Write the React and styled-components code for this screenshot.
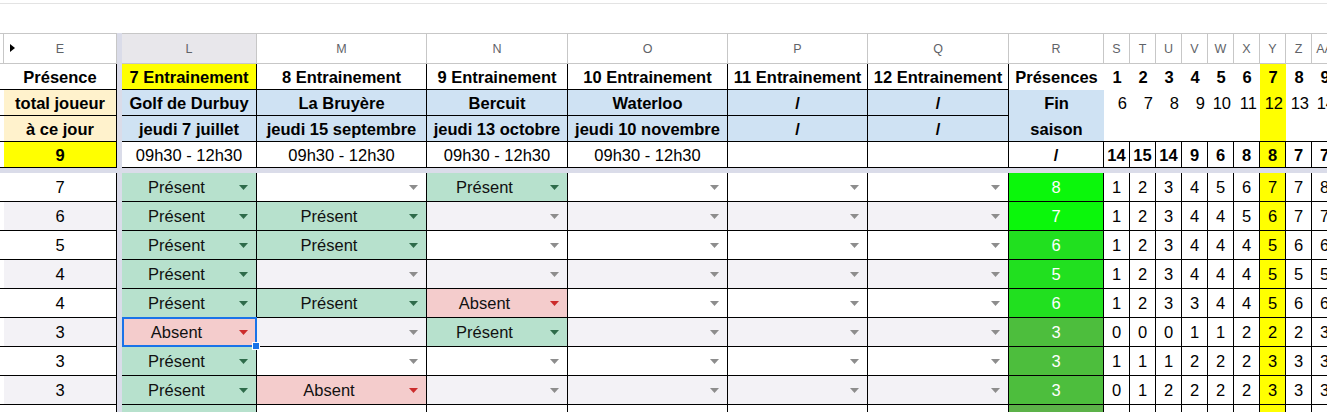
import React from 'react';
import styled, { createGlobalStyle, css } from 'styled-components';

const GlobalStyle = createGlobalStyle`
  html, body {
    margin: 0;
    padding: 0;
    background: #ffffff;
  }
  body {
    font-family: "Liberation Sans", Arial, sans-serif;
  }
`;

const YELLOW = '#ffff00';
const CREAM = '#fff2cc';
const BLUE = '#cfe2f3';
const STRIPE = '#f3f2f6';

const CHOICES = {
  P: { label: 'Présent', bg: '#b7e1cd', caret: '#2e6b4a' },
  A: { label: 'Absent', bg: '#f4cccc', caret: '#cc2b2b' },
};

const PRES_COLORS = {
  8: '#0bf70b',
  7: '#0bf70b',
  6: '#21e01f',
  5: '#21e01f',
  3: '#4dbe3d',
};

const LETTERS = ['L', 'M', 'N', 'O', 'P', 'Q', 'R', 'S', 'T', 'U', 'V', 'W', 'X', 'Y', 'Z', 'AA'];
const HIGHLIGHT = 6; // index of column Y inside the S..AA block

const SESSIONS = [
  { title: '7 Entrainement', place: 'Golf de Durbuy', date: 'jeudi 7 juillet', hours: '09h30 - 12h30', current: true },
  { title: '8 Entrainement', place: 'La Bruyère', date: 'jeudi 15 septembre', hours: '09h30 - 12h30' },
  { title: '9 Entrainement', place: 'Bercuit', date: 'jeudi 13 octobre', hours: '09h30 - 12h30' },
  { title: '10 Entrainement', place: 'Waterloo', date: 'jeudi 10 novembre', hours: '09h30 - 12h30' },
  { title: '11 Entrainement', place: '/', date: '/', hours: '' },
  { title: '12 Entrainement', place: '/', date: '/', hours: '' },
];

const ROUNDS = [1, 2, 3, 4, 5, 6, 7, 8, 9];
const ROUND_IDS = [6, 7, 8, 9, 10, 11, 12, 13, 14];
const ROUND_TOTALS = [14, 15, 14, 9, 6, 8, 8, 7, 7];

const PLAYERS = [
  { total: 7, marks: ['P', '', 'P', '', '', ''], pres: 8, counts: [1, 2, 3, 4, 5, 6, 7, 7, 8] },
  { total: 6, marks: ['P', 'P', '', '', '', ''], pres: 7, counts: [1, 2, 3, 4, 4, 5, 6, 7, 7] },
  { total: 5, marks: ['P', 'P', '', '', '', ''], pres: 6, counts: [1, 2, 3, 4, 4, 4, 5, 6, 6] },
  { total: 4, marks: ['P', '', '', '', '', ''], pres: 5, counts: [1, 2, 3, 4, 4, 4, 5, 5, 5] },
  { total: 4, marks: ['P', 'P', 'A', '', '', ''], pres: 6, counts: [1, 2, 3, 3, 4, 4, 5, 6, 6] },
  { total: 3, marks: ['A', '', 'P', '', '', ''], pres: 3, counts: [0, 0, 0, 1, 1, 2, 2, 2, 3], selected: 0 },
  { total: 3, marks: ['P', '', '', '', '', ''], pres: 3, counts: [1, 1, 1, 2, 2, 2, 3, 3, 3] },
  { total: 3, marks: ['P', 'A', '', '', '', ''], pres: 3, counts: [0, 1, 2, 2, 2, 2, 3, 3, 3] },
  { total: '', marks: ['P', '', '', '', '', ''], pres: '', presBg: '#5cb249', counts: ['', '', '', '', '', '', '', '', ''] },
];

const Page = styled.div`
  width: 1327px;
  height: 412px;
  overflow: hidden;
  padding-top: 3px;
  box-sizing: border-box;
  background: #fff;
`;

const Toolbar = styled.div`
  height: 30px;
  box-sizing: border-box;
  border-top: 1px solid #e3e3e3;
`;

const Sheet = styled.div`
  display: grid;
  grid-template-columns: 4px 113px 5px 135px 170px 141px 160px 140px 141px 95px repeat(9, 26px);
  grid-template-rows: 31px repeat(4, 26px) 5px repeat(9, 29px);
  font-size: 16.5px;
  color: #000;
`;

const FreezeCol = styled.div`
  grid-column: 3;
  grid-row: 1 / -1;
  background: #dadce9;
`;

const FreezeRow = styled.div`
  grid-column: 1 / -1;
  grid-row: 6;
  background: #dadce9;
`;

const ColHead = styled.div`
  position: relative;
  display: flex;
  align-items: center;
  justify-content: center;
  box-sizing: border-box;
  border-top: 1px solid #c7c7c7;
  border-bottom: 1px solid #c7c7c7;
  border-right: 1px solid #c7c7c7;
  background: ${(p) => (p.$active ? '#e8e7eb' : '#fff')};
  color: #5f6368;
  font-size: 12.5px;
  white-space: nowrap;
  overflow: hidden;
`;

const ExpandMark = styled.svg`
  position: absolute;
  left: 6px;
  top: 10px;
`;

const Cell = styled.div`
  position: relative;
  display: flex;
  align-items: center;
  justify-content: ${(p) => (p.$align === 'right' ? 'flex-end' : 'center')};
  padding: 0 ${(p) => (p.$align === 'right' ? '3px' : '2px')};
  box-sizing: border-box;
  min-width: 0;
  border-right: ${(p) => (p.$noRight ? '0' : '1px solid #000')};
  border-bottom: ${(p) => (p.$noBottom ? '0' : '1px solid #000')};
  background: ${(p) => p.$bg || '#fff'};
  color: ${(p) => p.$color || '#000'};
  font-weight: ${(p) => (p.$bold ? 700 : 400)};
  line-height: 26px;
  text-align: center;
  white-space: nowrap;
  overflow: hidden;
  ${(p) =>
    p.$span &&
    css`
      grid-row: span ${p.$span};
    `}
`;

const Choice = styled(Cell)`
  justify-content: flex-start;
  padding: 0 8px 0 0;
  overflow: visible;
  ${(p) =>
    p.$selected &&
    css`
      z-index: 2;
      &::before {
        content: '';
        position: absolute;
        top: -1px;
        left: 0;
        right: -1px;
        bottom: -1px;
        border: 2px solid #1a73e8;
      }
      &::after {
        content: '';
        position: absolute;
        right: -4px;
        bottom: -4px;
        width: 6px;
        height: 6px;
        background: #1a73e8;
        border: 1px solid #fff;
      }
    `}
`;

const ChoiceText = styled.span`
  flex: 1;
  text-align: center;
  color: #111;
`;

const CaretSvg = styled.svg`
  flex-shrink: 0;
  margin-left: 8px;
`;

function Caret({ color }) {
  return (
    <CaretSvg width="9" height="5" viewBox="0 0 9 5">
      <path d="M0 0h9L4.5 5z" fill={color} />
    </CaretSvg>
  );
}

function ChoiceCell({ mark, stripe, selected }) {
  const choice = CHOICES[mark];
  return (
    <Choice $bg={choice ? choice.bg : stripe ? STRIPE : '#fff'} $selected={selected}>
      <ChoiceText>{choice ? choice.label : ''}</ChoiceText>
      <Caret color={choice ? choice.caret : '#8d8d8d'} />
    </Choice>
  );
}

function HeaderRows() {
  return (
    <>
      <ColHead />
      <ColHead>
        <ExpandMark width="5" height="8" viewBox="0 0 5 8">
          <path d="M0 0L5 4L0 8z" fill="#000" />
        </ExpandMark>
        E
      </ColHead>
      {LETTERS.map((l) => (
        <ColHead key={l} $active={l === 'L'}>
          {l}
        </ColHead>
      ))}

      {/* row 1 */}
      <Cell />
      <Cell $bold>Présence</Cell>
      {SESSIONS.map((s) => (
        <Cell key={s.title} $bold $bg={s.current ? YELLOW : '#fff'}>
          {s.title}
        </Cell>
      ))}
      <Cell $bold $noRight $noBottom>Présences</Cell>
      {ROUNDS.map((n, i) => (
        <Cell key={`r${n}`} $bold $noRight $noBottom $bg={i === HIGHLIGHT ? YELLOW : '#fff'}>
          {n}
        </Cell>
      ))}

      {/* row 2 */}
      <Cell />
      <Cell $bold $bg={CREAM}>total joueur</Cell>
      {SESSIONS.map((s) => (
        <Cell key={`p${s.title}`} $bold $bg={BLUE}>
          {s.place}
        </Cell>
      ))}
      <Cell $bold $bg={BLUE} $span={2} $noRight>
        <span>
          Fin
          <br />
          saison
        </span>
      </Cell>
      {ROUND_IDS.map((n, i) => (
        <Cell key={`i${n}`} $align="right" $noRight $noBottom $bg={i === HIGHLIGHT ? YELLOW : '#fff'}>
          {n}
        </Cell>
      ))}

      {/* row 3 */}
      <Cell />
      <Cell $bold $bg={CREAM}>à ce jour</Cell>
      {SESSIONS.map((s) => (
        <Cell key={`d${s.title}`} $bold $bg={BLUE}>
          {s.date}
        </Cell>
      ))}
      {ROUNDS.map((n, i) => (
        <Cell key={`e${n}`} $noRight $bg={i === HIGHLIGHT ? YELLOW : '#fff'} />
      ))}

      {/* row 4 */}
      <Cell />
      <Cell $bold $bg={YELLOW}>9</Cell>
      {SESSIONS.map((s) => (
        <Cell key={`h${s.title}`}>{s.hours}</Cell>
      ))}
      <Cell $bold>/</Cell>
      {ROUND_TOTALS.map((n, i) => (
        <Cell key={`t${i}`} $bold $bg={i === HIGHLIGHT ? YELLOW : '#fff'}>
          {n}
        </Cell>
      ))}
    </>
  );
}

function PlayerRow({ player, index }) {
  const stripe = index % 2 === 1;
  return (
    <>
      <Cell />
      <Cell $bg={stripe ? STRIPE : '#fff'}>{player.total}</Cell>
      {player.marks.map((m, i) => (
        <ChoiceCell key={i} mark={m} stripe={stripe} selected={player.selected === i} />
      ))}
      <Cell $color="#fff" $bg={player.presBg || PRES_COLORS[player.pres]}>
        {player.pres}
      </Cell>
      {player.counts.map((n, i) => (
        <Cell key={`c${i}`} $bg={i === HIGHLIGHT ? YELLOW : '#fff'}>
          {n}
        </Cell>
      ))}
    </>
  );
}

export default function App() {
  return (
    <Page>
      <GlobalStyle />
      <Toolbar />
      <Sheet>
        <FreezeCol />
        <FreezeRow />
        <HeaderRows />
        {PLAYERS.map((p, i) => (
          <PlayerRow key={i} player={p} index={i} />
        ))}
      </Sheet>
    </Page>
  );
}
